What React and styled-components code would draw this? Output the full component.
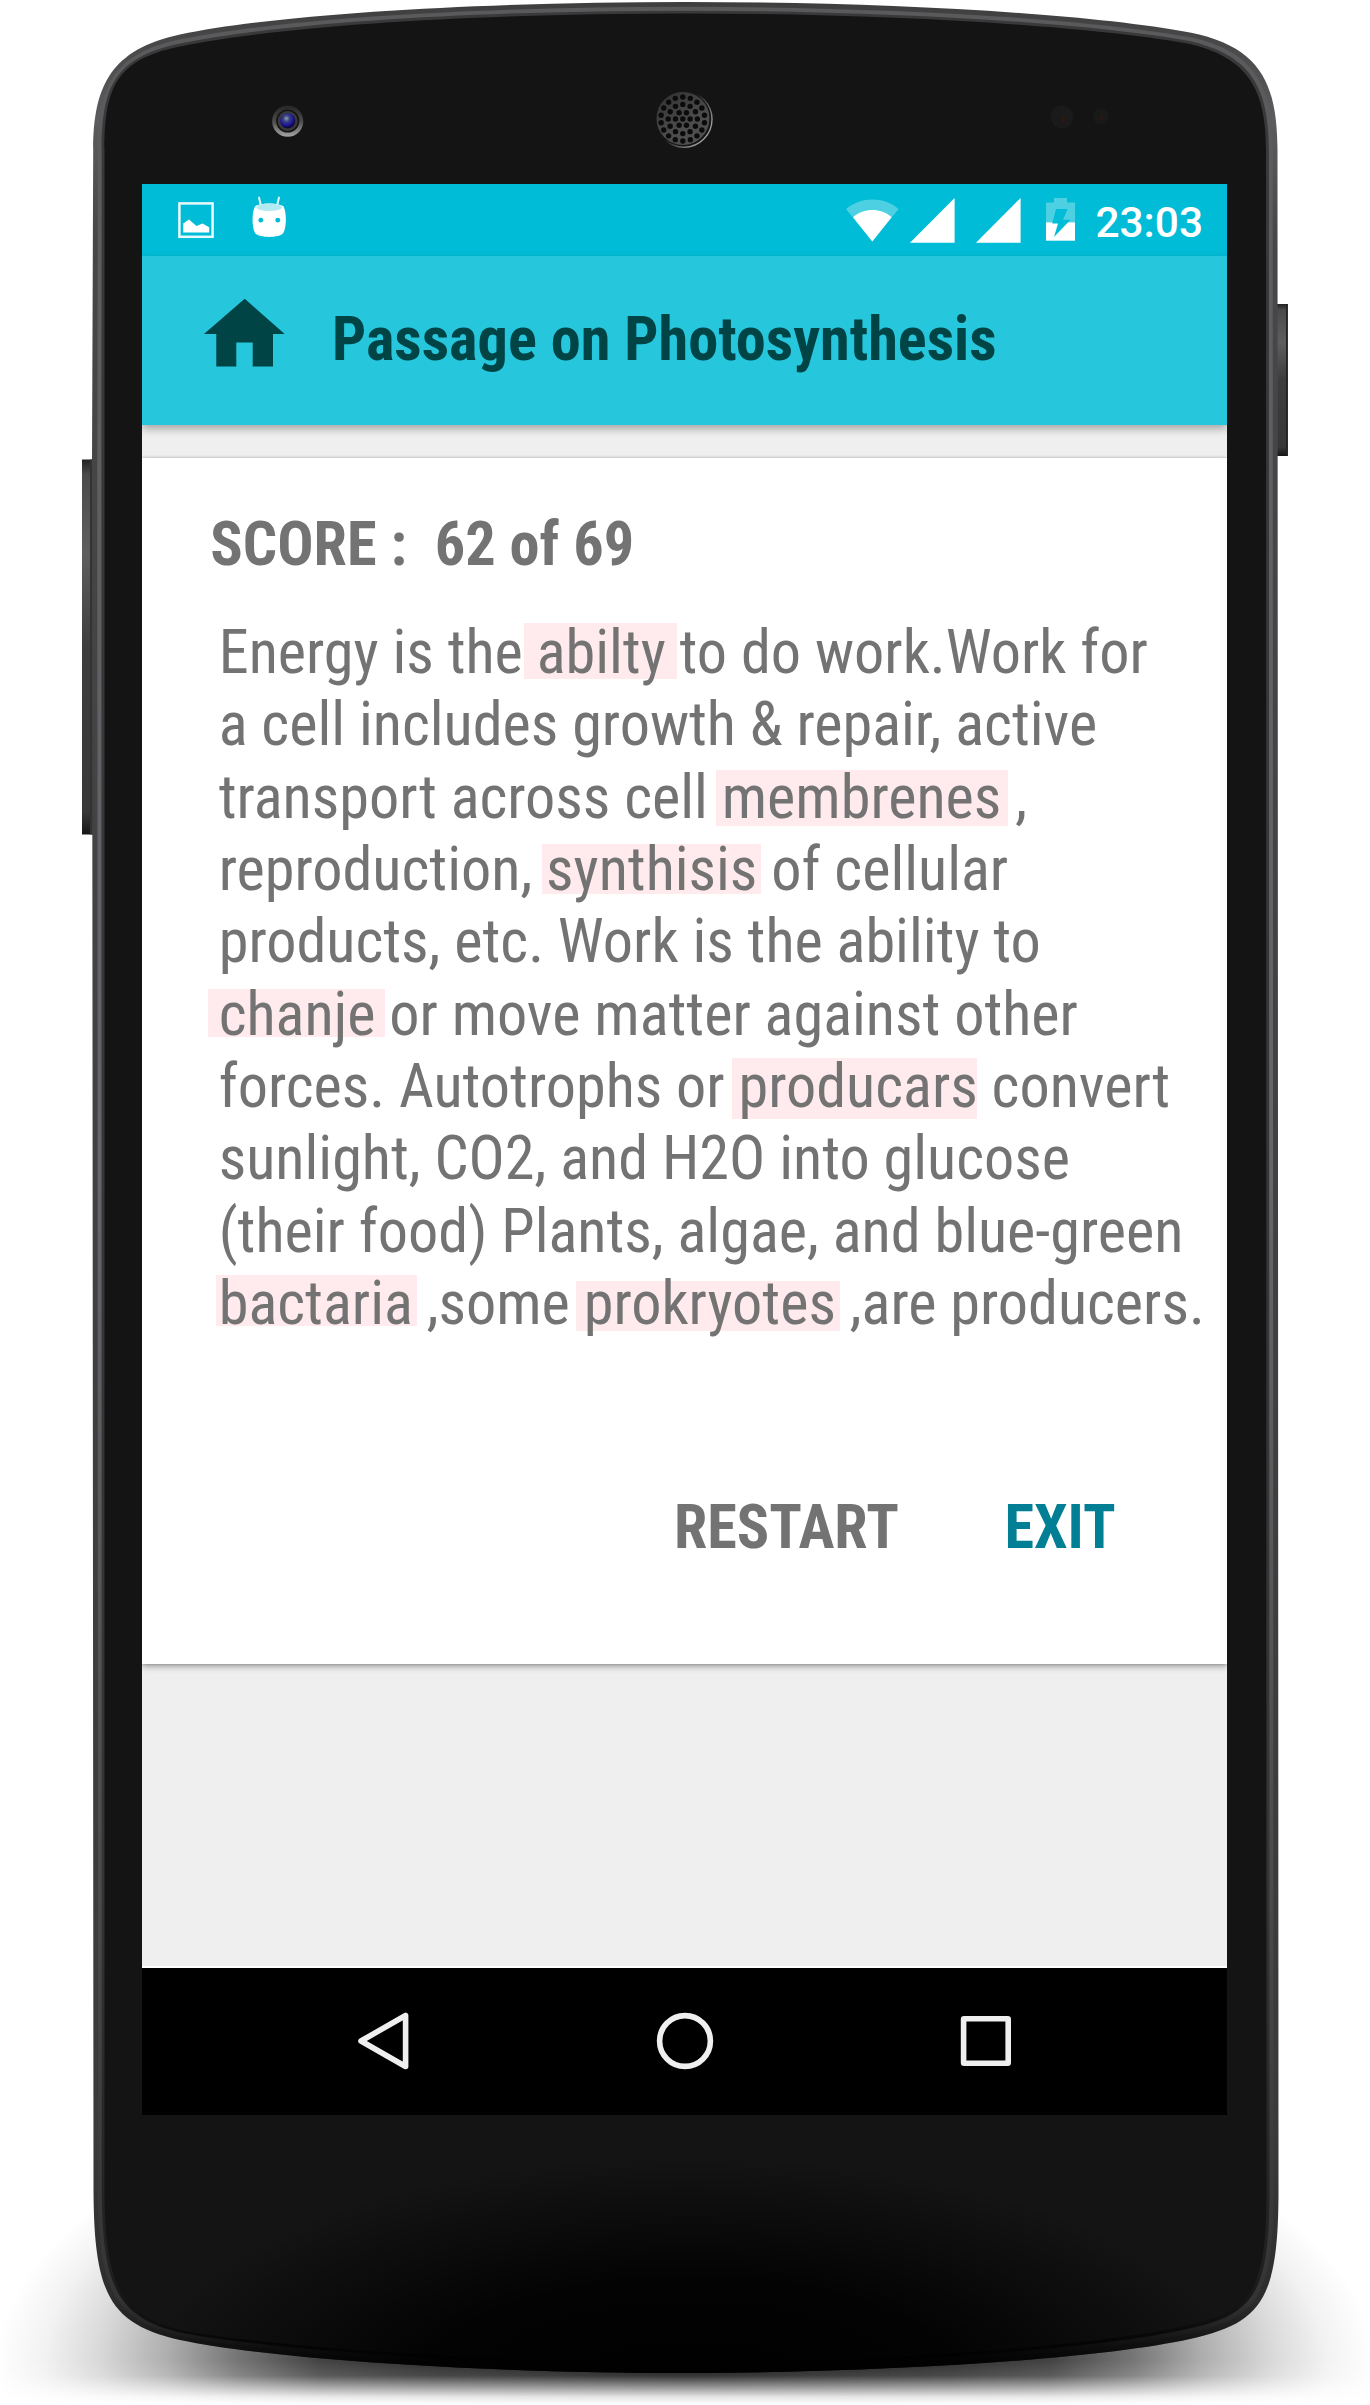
import React from "react";
import styled, { createGlobalStyle } from "styled-components";

const GlobalStyle = createGlobalStyle`
  body {
    margin: 0;
    background: #fff;
    -webkit-font-smoothing: antialiased;
  }
`;

const FONT = `"Roboto Condensed", Roboto, sans-serif`;

const Stage = styled.main`
  position: relative;
  box-sizing: border-box;
  width: 1370px;
  height: 2405px;
  padding: 184px 143px 290px 142px;
  overflow: hidden;
  font-family: ${FONT};
`;

const Body = styled.svg`
  position: absolute;
  inset: 0;
  width: 1370px;
  height: 2405px;
`;

const Screen = styled.section`
  position: relative;
  display: flex;
  flex-direction: column;
  height: 1931px;
  background: #efefef;
  overflow: hidden;
`;

const StatusBar = styled.header`
  display: flex;
  flex: none;
  justify-content: space-between;
  height: 72px;
  background: #00bcd7;
`;

const StatusGroup = styled.div`
  display: flex;
  align-items: flex-start;
`;

const StatusIcon = styled.svg`
  display: block;
  flex: none;
  width: ${(p) => p.$w}px;
  height: 72px;
  margin-left: ${(p) => p.$gap}px;
`;

const Clock = styled.time`
  margin: 14px 24px 0 20px;
  font: 500 42.4px/50px Roboto, sans-serif;
  color: #fff;
`;

const AppBar = styled.div`
  position: relative;
  z-index: 1;
  display: flex;
  flex: none;
  align-items: flex-start;
  height: 169px;
  background: #26c6dc;
  color: #004445;
  box-shadow: 0 4px 8px rgba(0, 0, 0, 0.3);
`;

const HomeIcon = styled.svg`
  flex: none;
  width: 82px;
  height: 70px;
  margin: 42px 0 0 62px;
`;

const Title = styled.h1`
  margin: 48px 0 0 46px;
  font-size: 60.3px;
  font-weight: 700;
  line-height: 72px;
  white-space: nowrap;
`;

const Content = styled.div`
  flex: 1;
  padding-top: 33px;
  background: #efefef;
  border-bottom: 2px solid #fff;
`;

const Card = styled.article`
  box-sizing: border-box;
  height: 1206px;
  padding: 51px 0 0 68.3px;
  background: #fff;
  color: #737373;
  box-shadow: 0 3px 6px rgba(0, 0, 0, 0.3), 0 0 3px rgba(0, 0, 0, 0.22);
`;

const Score = styled.h2`
  margin: 0;
  font-size: 60.3px;
  font-weight: 700;
  line-height: 72px;
  white-space: pre;
`;

const Passage = styled.div`
  margin: 36px 0 0 8.4px;
`;

const Line = styled.p`
  margin: 0;
  font-size: 60.25px;
  line-height: 72.33px;
  white-space: pre;
`;

const Mistake = styled.span`
  position: relative;
  z-index: 0;

  &::before {
    content: "";
    position: absolute;
    z-index: -1;
    top: ${(p) => p.$top}px;
    height: ${(p) => p.$height}px;
    left: ${(p) => -p.$before}px;
    right: ${(p) => -p.$after}px;
    background: #ffebed;
  }
`;

const Actions = styled.div`
  display: flex;
  margin: 152px 0 0 463.7px;
`;

const Action = styled.button`
  min-width: ${(p) => p.$minWidth || 0}px;
  padding: 0;
  border: 0;
  background: none;
  color: ${(p) => (p.$primary ? "#027f94" : "#737373")};
  font: 700 60.2px/72px ${FONT};
  text-align: left;
`;

const NavBar = styled.nav`
  display: flex;
  flex: none;
  justify-content: center;
  gap: 241px;
  height: 147px;
  background: #000;
`;

const NavIcon = styled.svg`
  width: 60px;
  height: 60px;
  margin-top: 42.5px;
  fill: none;
  stroke: #efefef;
  stroke-width: 5.6;
  stroke-linejoin: round;
`;

/* Outline of the shell and of the glass face: same commands, so rims between them can be interpolated. */
const OUTER = [
  92, 460, 93.2, 150, 93.2, 85, 112, 49, 180, 34.5, 290, 12, 500, 2, 685, 2, 870, 2, 1080, 12, 1190, 32.5,
  1262, 47, 1277, 85, 1277.5, 150, 1278.5, 2190, 1278.5, 2300, 1262, 2323, 1190, 2339, 1090, 2361, 860, 2373, 685, 2373,
  500, 2373, 280, 2361, 180, 2340, 110, 2324, 94, 2295, 93.5, 2190,
];
const INNER = [
  104.5, 460, 104.5, 150, 104.5, 84, 118, 58, 185, 45.5, 300, 23, 500, 13.5, 685, 13.5, 870, 13.5, 1075, 24, 1187, 43.5,
  1250, 57, 1266, 92, 1266, 150, 1266.5, 2190, 1266.5, 2292, 1252, 2312, 1185, 2326, 1085, 2348, 860, 2363, 685, 2363,
  510, 2363, 280, 2348, 185, 2331, 120, 2317, 105, 2285, 104.5, 2190,
];
const rim = (t) => {
  const v = OUTER.map((n, i) => +(n + (INNER[i] - n) * t).toFixed(2));
  const p = (i) => `${v[i * 2]} ${v[i * 2 + 1]}`;
  const c = (i) => `C${p(i)} ${p(i + 1)} ${p(i + 2)}`;
  return `M${p(0)}L${p(1)}${c(2)}${c(5)}${c(8)}${c(11)}L${p(14)}${c(15)}${c(18)}${c(21)}${c(24)}Z`;
};

const RINGS = [
  [1, 0, 0],
  [6, 7.3, 0],
  [12, 14.6, 0],
  [18, 22, 10],
];
const HOLES = RINGS.flatMap(([n, r, turn]) =>
  Array.from({ length: n }, (_, i) => {
    const a = ((turn + (360 * i) / n) * Math.PI) / 180;
    return [682.8 + r * Math.cos(a), 119 + r * Math.sin(a)];
  })
);

function PhoneBody() {
  return (
    <Body viewBox="0 0 1370 2405" aria-hidden="true">
      <defs>
        <radialGradient id="ground" gradientUnits="userSpaceOnUse" cx="0" cy="0" r="1" gradientTransform="translate(685 2368) scale(690 310)">
          <stop offset="0" stopColor="#000" stopOpacity="0.92" />
          <stop offset="0.38" stopColor="#000" stopOpacity="0.82" />
          <stop offset="0.53" stopColor="#000" stopOpacity="0.74" />
          <stop offset="0.65" stopColor="#000" stopOpacity="0.54" />
          <stop offset="0.75" stopColor="#000" stopOpacity="0.32" />
          <stop offset="0.85" stopColor="#000" stopOpacity="0.15" />
          <stop offset="0.93" stopColor="#000" stopOpacity="0.05" />
          <stop offset="1" stopColor="#000" stopOpacity="0" />
        </radialGradient>
        <linearGradient id="fade" gradientUnits="userSpaceOnUse" x1="0" y1="2180" x2="0" y2="2405">
          <stop offset="0" stopColor="#fff" />
          <stop offset="0.8" stopColor="#fff" />
          <stop offset="0.87" stopColor="#ddd" />
          <stop offset="0.92" stopColor="#777" />
          <stop offset="0.965" stopColor="#1c1c1c" />
          <stop offset="1" stopColor="#000" />
        </linearGradient>
        <mask id="groundMask">
          <rect y="2000" width="1370" height="405" fill="url(#fade)" />
        </mask>
        <linearGradient id="edge" x1="0" y1="0" x2="0" y2="1">
          <stop offset="0" stopColor="#3e3e3f" />
          <stop offset="0.05" stopColor="#5c5c5e" />
          <stop offset="0.1" stopColor="#47474a" />
          <stop offset="0.9" stopColor="#3a3a3b" />
          <stop offset="0.97" stopColor="#2c2c2c" />
          <stop offset="1" stopColor="#080808" />
        </linearGradient>
        <linearGradient id="light" x1="0" y1="0" x2="0" y2="1">
          <stop offset="0" stopColor="#5a5a5c" />
          <stop offset="0.5" stopColor="#66666a" />
          <stop offset="0.8" stopColor="#4a4a4c" />
          <stop offset="0.97" stopColor="#343434" />
          <stop offset="1" stopColor="#0c0c0c" />
        </linearGradient>
        <linearGradient id="seam" x1="0" y1="0" x2="0" y2="1">
          <stop offset="0" stopColor="#39393a" />
          <stop offset="0.8" stopColor="#343435" />
          <stop offset="0.96" stopColor="#202020" />
          <stop offset="0.99" stopColor="#090909" />
        </linearGradient>
        <radialGradient id="chin" gradientUnits="userSpaceOnUse" cx="0" cy="0" r="1" gradientTransform="translate(690 2400) scale(570 245)">
          <stop offset="0" stopColor="#000" />
          <stop offset="0.5" stopColor="#000" stopOpacity="0.85" />
          <stop offset="1" stopColor="#000" stopOpacity="0" />
        </radialGradient>
        <linearGradient id="key" x1="0" y1="0" x2="0" y2="1">
          <stop offset="0" stopColor="#222" />
          <stop offset="0.04" stopColor="#4a4a4a" />
          <stop offset="0.25" stopColor="#5e5e5e" />
          <stop offset="0.5" stopColor="#3d3d3d" />
          <stop offset="0.94" stopColor="#383838" />
          <stop offset="1" stopColor="#151515" />
        </linearGradient>
        <linearGradient id="lensRing" x1="0" y1="0" x2="0" y2="1">
          <stop offset="0" stopColor="#262626" />
          <stop offset="0.5" stopColor="#4a4a4a" />
          <stop offset="1" stopColor="#a5a5a5" />
        </linearGradient>
        <radialGradient id="lens" cx="0.42" cy="0.35" r="0.6">
          <stop offset="0" stopColor="#8fa0b0" />
          <stop offset="0.35" stopColor="#3c4280" />
          <stop offset="0.75" stopColor="#1a1497" />
          <stop offset="1" stopColor="#100a38" />
        </radialGradient>
        <linearGradient id="grille" x1="0.2" y1="0" x2="0.8" y2="1">
          <stop offset="0" stopColor="#333" />
          <stop offset="0.6" stopColor="#4c4c4c" />
          <stop offset="1" stopColor="#505050" />
        </linearGradient>
        <linearGradient id="grilleRim" x1="0.2" y1="0.2" x2="0.9" y2="0.7">
          <stop offset="0.4" stopColor="#151515" />
          <stop offset="1" stopColor="#999" />
        </linearGradient>
      </defs>

      <rect y="2050" width="1370" height="355" fill="url(#ground)" mask="url(#groundMask)" />

      <rect x="82" y="459.5" width="14" height="375" fill="url(#key)" />
      <rect x="90" y="459.5" width="3" height="375" fill="#333" />
      <rect x="1275" y="304" width="12.8" height="152" fill="url(#key)" />
      <rect x="1286" y="304" width="1.8" height="152" fill="#222" />

      <path d={rim(0)} fill="url(#edge)" />
      <path d={rim(0.42)} fill="url(#light)" />
      <path d={rim(0.75)} fill="url(#seam)" />
      <path d={rim(1)} fill="#141414" />
      <path d={rim(0)} fill="url(#chin)" />

      <circle cx="287.7" cy="121.2" r="15.6" fill="url(#lensRing)" />
      <circle cx="287.7" cy="121" r="11.6" fill="#151515" />
      <circle cx="287.7" cy="121" r="10" fill="#3a3a3a" />
      <circle cx="287.7" cy="120.8" r="7.6" fill="url(#lens)" />

      <circle cx="684" cy="119.2" r="28" fill="none" stroke="url(#grilleRim)" strokeWidth="1.4" />
      <circle cx="683" cy="118.5" r="26.5" fill="url(#grille)" />
      {HOLES.map(([x, y], i) => (
        <circle key={i} cx={x} cy={y} r="2.7" fill="#0b0b0b" />
      ))}

      <circle cx="1062" cy="117" r="11.5" fill="#1a1a1a" />
      <ellipse cx="1063.5" cy="119" rx="1.6" ry="3.5" fill="#2a1813" />
      <circle cx="1101" cy="116.5" r="8" fill="#191919" />
      <ellipse cx="1101.5" cy="117.5" rx="1.3" ry="3" fill="#2a1813" />
    </Body>
  );
}

function SignalIcon({ gap }) {
  return (
    <StatusIcon $w={45} $gap={gap} viewBox="0 0 45 72">
      <path d="M0 58.8L44.6 14V58.8Z" fill="#fff" />
    </StatusIcon>
  );
}

export default function App() {
  return (
    <>
      <GlobalStyle />
      <Stage>
        <PhoneBody />
        <Screen>
          <StatusBar>
            <StatusGroup>
              <StatusIcon $w={36} $gap={36} viewBox="0 0 36 72">
                <rect x="1.4" y="19.4" width="33.2" height="33.4" fill="none" stroke="#e9fafd" strokeWidth="2.5" />
                <path d="M5.2 48.6V39.5L11 35.6L18.5 42L24.5 39.4L31.2 43.2V48.6Z" fill="#fff" />
              </StatusIcon>
              <StatusIcon $w={36} $gap={36.5} viewBox="0 0 36 72">
                <path d="M8 13.6L9.8 21M28 13.6L26.2 21" stroke="#e4f8fb" strokeWidth="2" strokeLinecap="round" />
                <path d="M4 22.5C8 18.6 28 18.6 32.5 22.5C35.6 28 35.8 43 32.3 49C28.5 54.2 8 54.2 4 49C.6 43 .8 28 4 22.5Z" fill="#fff" />
                <ellipse cx="18.2" cy="23.3" rx="12.8" ry="3.7" fill="#b2ebf2" />
                <circle cx="9.8" cy="36.2" r="2.4" fill="#00bcd7" />
                <circle cx="26.8" cy="36.2" r="2.4" fill="#00bcd7" />
              </StatusIcon>
            </StatusGroup>
            <StatusGroup>
              <StatusIcon $w={53} $gap={0} viewBox="0 0 53 72">
                <path d="M0 25C15 12.4 38 12.4 52.6 25L26.3 57.4Z" fill="#4dd0e2" />
                <path d="M7 33.2C18 23.6 35 23.6 45.6 33.2L26.3 57.4Z" fill="#fff" />
              </StatusIcon>
              <SignalIcon gap={11} />
              <SignalIcon gap={21} />
              <StatusIcon $w={29} $gap={25} viewBox="0 0 29 72">
                <path d="M0 18.5H8V14H21V18.5H29V38.3H0Z" fill="#4dd0e2" />
                <path d="M0 38.3H29V56.7H0Z" fill="#fff" />
                <path d="M10 25H21.6L17 35.8H24.5L8 53L12 39.5H6.2Z" fill="#00bcd7" />
              </StatusIcon>
              <Clock>23:03</Clock>
            </StatusGroup>
          </StatusBar>

          <AppBar>
            <HomeIcon viewBox="0 0 82 70">
              <path d="M40.7.7L80.7 36H69V68.6H48.7V44.6H32.3V68.6H12.3V36H0Z" fill="currentColor" />
            </HomeIcon>
            <Title>Passage on Photosynthesis</Title>
          </AppBar>

          <Content>
            <Card>
              <Score>{"SCORE :  62 of 69"}</Score>
              <Passage>
                <Line>
                  Energy is the <Mistake $top={6} $height={55.6} $before={13} $after={11.5}>abilty</Mistake> to do work.Work for
                </Line>
                <Line>{"a cell includes growth & repair, active"}</Line>
                <Line>
                  transport across cell <Mistake $top={8.5} $height={55.6} $before={5.5} $after={7}>membrenes</Mistake> ,
                </Line>
                <Line>
                  reproduction, <Mistake $top={10.5} $height={49.5} $before={4.5} $after={3.5}>synthisis</Mistake> of cellular
                </Line>
                <Line>products, etc. Work is the ability to</Line>
                <Line>
                  <Mistake $top={10} $height={48} $before={10.5} $after={10}>chanje</Mistake> or move matter against other
                </Line>
                <Line>
                  forces. Autotrophs or <Mistake $top={7.5} $height={60.3} $before={6} $after={-0.5}>producars</Mistake> convert
                </Line>
                <Line>sunlight, CO2, and H2O into glucose</Line>
                <Line>(their food) Plants, algae, and blue-green</Line>
                <Line>
                  <Mistake $top={7.5} $height={50.7} $before={2.7} $after={4}>bactaria</Mistake>
                  {" ,some "}
                  <Mistake $top={13} $height={49.7} $before={7.5} $after={4}>prokryotes</Mistake> ,are producers.
                </Line>
              </Passage>
              <Actions>
                <Action $minWidth={330.4}>RESTART</Action>
                <Action $primary>EXIT</Action>
              </Actions>
            </Card>
          </Content>

          <NavBar>
            <NavIcon viewBox="0 0 60 60">
              <path d="M7 30L51.6 4.5V55.5Z" />
            </NavIcon>
            <NavIcon viewBox="0 0 60 60">
              <circle cx="30" cy="30" r="25.4" />
            </NavIcon>
            <NavIcon viewBox="0 0 60 60">
              <rect x="7.6" y="7.8" width="44.6" height="44.4" rx="0.5" />
            </NavIcon>
          </NavBar>
        </Screen>
      </Stage>
    </>
  );
}
